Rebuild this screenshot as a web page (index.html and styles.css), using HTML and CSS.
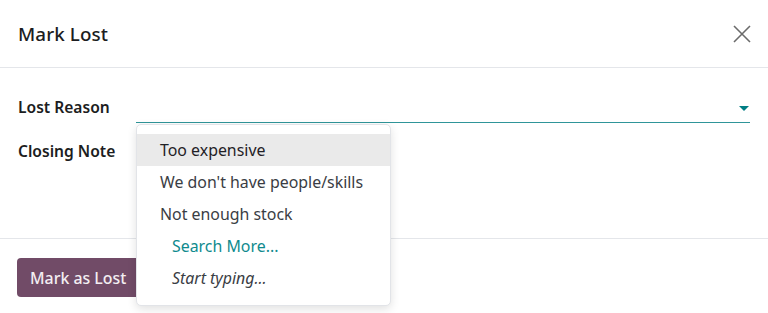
FILE: index.html
```html
<!DOCTYPE html>
<html>
<head>
<meta charset="utf-8">
<link rel="stylesheet" href="styles.css">
</head>
<body>
<div class="modal">
  <header class="modal-header">
    <h4 class="modal-title">Mark Lost</h4>
    <button class="btn-close" aria-label="Close">
      <svg width="18" height="18" viewBox="0 0 18 18"><path d="M1 1L17 17M17 1L1 17" stroke="#6b6b6b" stroke-width="1.6" fill="none"/></svg>
    </button>
  </header>
  <main class="modal-body">
    <div class="field-row">
      <label class="field-label">Lost Reason</label>
      <div class="field-input">
        <div class="input-line">
          <span class="caret"></span>
        </div>
        <ul class="dropdown">
          <li class="item active">Too expensive</li>
          <li class="item">We don't have people/skills</li>
          <li class="item">Not enough stock</li>
          <li class="item extra link">Search More...</li>
          <li class="item extra hint">Start typing...</li>
        </ul>
      </div>
    </div>
    <div class="field-row">
      <label class="field-label">Closing Note</label>
      <div class="field-input"></div>
    </div>
  </main>
  <footer class="modal-footer">
    <button class="btn-primary">Mark as Lost</button>
  </footer>
</div>
</body>
</html>
```

FILE: styles.css
```css
* { box-sizing: border-box; }
html, body {
  margin: 0;
  padding: 0;
  background: #ffffff;
  font-family: "Noto Sans", "Open Sans", sans-serif;
  color: #1f2024;
}
.modal {
  width: 768px;
  height: 313px;
  display: flex;
  flex-direction: column;
  overflow: hidden;
}
.modal-header {
  height: 68px;
  border-bottom: 1px solid #e4e6ea;
  display: flex;
  align-items: center;
  justify-content: space-between;
  padding: 0 17px 0 18px;
}
.modal-title {
  margin: 0;
  font-size: 18.8px;
  font-weight: 500;
  color: #1c1d21;
  letter-spacing: 0.1px;
}
.btn-close {
  border: 0;
  background: none;
  padding: 0;
  width: 18px;
  height: 18px;
  display: flex;
}
.modal-body {
  height: 171px;
  border-bottom: 1px solid #e4e6ea;
  padding: 24px 18px 0 18px;
  display: flex;
  flex-direction: column;
  gap: 14px;
}
.field-row {
  display: grid;
  grid-template-columns: 118px 1fr;
  align-items: start;
}
.field-label {
  font-size: 15.6px;
  font-weight: 600;
  line-height: 30px;
  color: #1c1d21;
}
.field-input {
  position: relative;
  height: 30px;
}
.input-line {
  height: 31px;
  border-bottom: 1.5px solid #2f9599;
  display: flex;
  justify-content: flex-end;
  align-items: center;
  padding-right: 1px;
}
.caret {
  width: 0;
  height: 0;
  border-left: 5px solid transparent;
  border-right: 5px solid transparent;
  border-top: 5px solid #017e84;
  margin-top: 2px;
}
.dropdown {
  position: absolute;
  left: 0;
  top: 32px;
  width: 255px;
  margin: 0;
  padding: 9px 0 11px 0;
  list-style: none;
  background: #ffffff;
  border: 1px solid #e2e4e8;
  border-radius: 5px;
  box-shadow: 0 3px 10px rgba(0,0,0,0.12);
  z-index: 5;
}
.item {
  height: 32px;
  line-height: 32px;
  padding-left: 23px;
  font-size: 15.9px;
  color: #3a3d44;
  white-space: nowrap;
}
.item.active {
  background: #eaeaea;
  color: #1f2126;
}
.item.extra { padding-left: 35px; }
.item.link { color: #0f8a8e; }
.item.hint { font-style: italic; color: #3a3d44; }
.modal-footer {
  padding: 19px 17px 0 17px;
}
.btn-primary {
  font-family: "Noto Sans", "Open Sans", sans-serif;
  background: #714b67;
  color: #f3eef2;
  border: 0;
  border-radius: 4px;
  height: 39px;
  padding: 0 14px 0 13px;
  font-size: 15.9px;
  font-weight: 500;
}
```
